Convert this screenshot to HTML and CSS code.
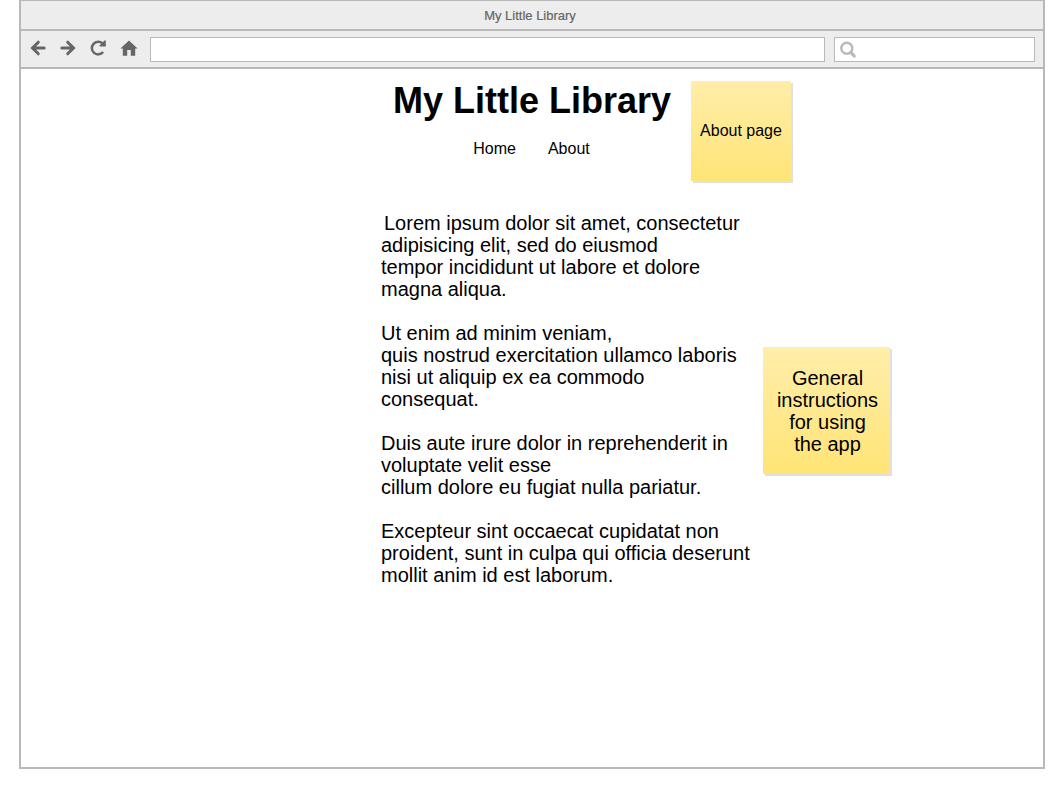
FILE: index.html
```html
<!DOCTYPE html>
<html lang="en">
<head>
<meta charset="utf-8">
<title>My Little Library</title>
<link rel="stylesheet" href="styles.css">
</head>
<body>
<div class="window">
  <header class="titlebar">My Little Library</header>
  <div class="toolbar">
    <div class="controls">
      <svg class="icon" viewBox="0 0 16 16"><path d="M14.2 8H3M8.3 2.2L2.5 8l5.8 5.8"/></svg>
      <svg class="icon" viewBox="0 0 16 16"><path d="M1.8 8H13M7.7 2.2L13.5 8l-5.8 5.8"/></svg>
      <svg class="icon" viewBox="0 0 16 16"><path class="thin" d="M13.1 12A6.3 6.3 0 1 1 12.6 3.6"/><path class="solid" d="M15.8 .6v6H9.8V5.2L14.4 .6z"/></svg>
      <svg class="icon home" viewBox="0 0 18 16"><path class="solid" d="M9 .4L17.6 8.6H15.2V15.7H10.8V10H7.2V15.7H2.8V8.6H.4z"/></svg>
    </div>
    <div class="address"></div>
    <div class="search">
      <svg class="lens" viewBox="0 0 18 18"><circle cx="7.8" cy="7.3" r="5.5"/><path d="M12 11.7L15.2 15"/></svg>
    </div>
  </div>
  <main class="page">
    <h1 class="title">My Little Library</h1>
    <nav class="nav"><a>Home</a><a>About</a></nav>
    <article class="copy">
      <p class="first">Lorem ipsum dolor sit amet, consectetur<br>adipisicing elit, sed do eiusmod<br>tempor incididunt ut labore et dolore<br>magna aliqua.</p>
      <p>Ut enim ad minim veniam,<br>quis nostrud exercitation ullamco laboris<br>nisi ut aliquip ex ea commodo<br>consequat.</p>
      <p>Duis aute irure dolor in reprehenderit in<br>voluptate velit esse<br>cillum dolore eu fugiat nulla pariatur.</p>
      <p>Excepteur sint occaecat cupidatat non<br>proident, sunt in culpa qui officia deserunt<br>mollit anim id est laborum.</p>
    </article>
  </main>
  <aside class="note note-page">About page</aside>
  <aside class="note note-help">General<br>instructions<br>for using<br>the app</aside>
</div>
</body>
</html>
```
FILE: styles.css
```css
* { box-sizing: border-box; }
body {
  margin: 0;
  background: #fff;
  color: #000;
  font-family: "Liberation Sans", Arial, sans-serif;
}
.window {
  position: relative;
  width: 1026px;
  height: 769px;
  margin-left: 19px;
  border: 2px solid #b9b9b9;
  border-top-width: 1px;
}
.titlebar {
  height: 30px;
  padding-right: 4px;
  border-bottom: 2px solid #b9b9b9;
  background: #ededed;
  color: #666;
  font-size: 13px;
  line-height: 29px;
  text-align: center;
  -webkit-text-stroke: .2px #666;
}
.toolbar {
  display: flex;
  align-items: flex-start;
  height: 38px;
  padding: 6px 8px 0 9px;
  border-bottom: 2px solid #b9b9b9;
  background: #ededed;
}
.controls {
  display: flex;
  gap: 14px;
  width: 120px;
  padding-top: 3px;
}
.icon {
  flex: none;
  width: 16px;
  height: 16px;
  fill: none;
  stroke: #666;
  stroke-width: 3;
  stroke-linecap: round;
}
.icon .thin { stroke-width: 2.5; stroke-linecap: butt; }
.icon .solid { fill: #666; stroke: none; }
.icon.home { width: 18px; }
.address, .search {
  height: 25px;
  border: 1px solid #b9b9b9;
  background: #fff;
}
.address { width: 675px; }
.search {
  width: 201px;
  margin-left: 9px;
  padding: 3px 4px;
}
.lens {
  display: block;
  width: 18px;
  height: 18px;
  fill: none;
  stroke: #b9b9b9;
  stroke-width: 2.4;
}
.lens path { stroke-width: 3.2; stroke-linecap: round; }
.page { padding-top: 11px; }
.title {
  margin: 0;
  font-size: 36px;
  line-height: 42px;
  text-align: center;
}
.nav {
  display: flex;
  justify-content: center;
  gap: 32px;
  margin-top: 17px;
  padding-right: 1px;
  font-size: 16px;
  line-height: 20px;
}
.copy {
  margin: 53px 0 0 360px;
  width: 400px;
  font-size: 20px;
  line-height: 22px;
  white-space: nowrap;
}
.copy p { margin: 0 0 22px; }
.copy .first { text-indent: 3px; }
.note {
  position: absolute;
  display: flex;
  align-items: center;
  justify-content: center;
  background: linear-gradient(#ffeeaa, #ffe476);
  box-shadow: 2px 2px 0 #e0e0e0;
  text-align: center;
}
.note-page {
  left: 670px;
  top: 80px;
  width: 100px;
  height: 100px;
  font-size: 16px;
}
.note-help {
  display: block;
  left: 742px;
  top: 346px;
  width: 127px;
  height: 127px;
  padding: 20px 0 0 2px;
  font-size: 20px;
  line-height: 22px;
}
```
